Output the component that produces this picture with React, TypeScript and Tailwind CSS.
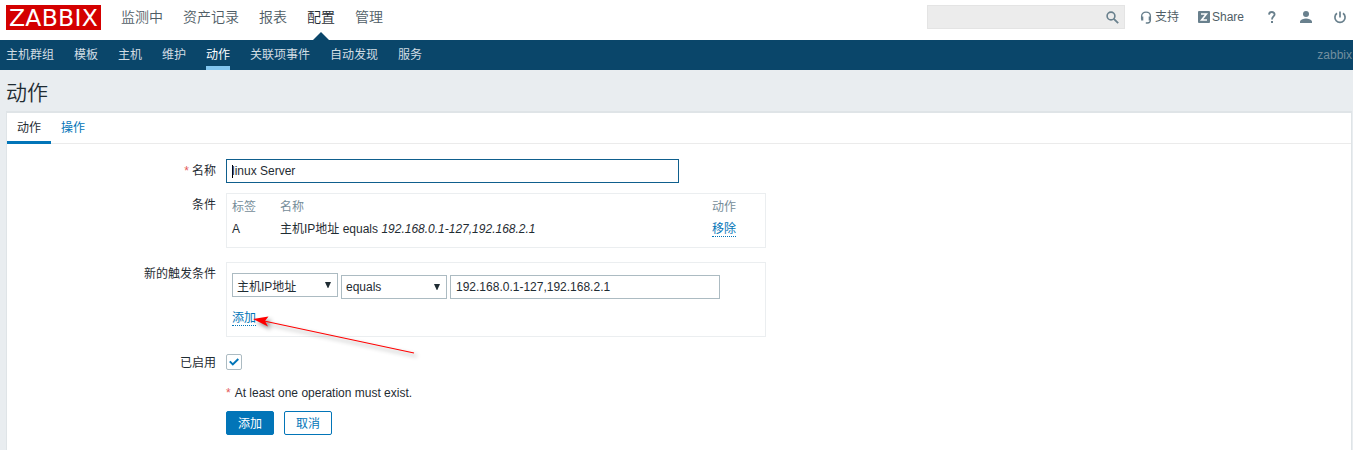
import React from "react";

const topMenu = ["监测中", "资产记录", "报表", "配置", "管理"];
const subMenu = ["主机群组", "模板", "主机", "维护", "动作", "关联项事件", "自动发现", "服务"];

function Header() {
  return (
    <header className="flex h-10 items-start bg-white pl-1.5 pr-1.5 text-[#4f5d66]">
      <div className="mt-[5px] flex h-[25px] w-[95px] shrink-0 items-center justify-center bg-[#d40000] pt-px font-['DejaVu_Sans',sans-serif] text-[23.5px] leading-[24px] tracking-[0.3px] text-white">
        ZABBIX
      </div>
      <nav className="ml-5 flex gap-5 text-sm leading-[34px] font-[350]">
        {topMenu.map((item) => (
          <a key={item} className={item === "配置" ? "relative h-10 text-[#1f2c33]" : "h-10"}>
            {item}
            {item === "配置" && (
              <svg className="absolute bottom-0 left-[6px]" width="16" height="8" viewBox="0 0 16 8">
                <path d="M0 8 8 0l8 8z" fill="#0a466a" />
              </svg>
            )}
          </a>
        ))}
      </nav>
      <div className="ml-auto mt-[5px] flex h-6 items-center">
        <div className="flex h-6 w-[198px] items-center justify-end border border-[#e4e4e4] bg-[#ececec] pr-[5px]">
          <svg width="13" height="13" viewBox="0 0 13 13" fill="none" stroke="#69808d">
            <circle cx="5" cy="5" r="3.9" strokeWidth="1.6" />
            <path d="m7.8 7.8 4.4 4.4" strokeWidth="1.8" />
          </svg>
        </div>
        <a className="ml-[15px] flex items-center gap-[3px]">
          <svg width="12" height="13" viewBox="0 0 12 13" fill="none" stroke="#69808d">
            <path d="M1.6 8V5.2C1.6 2.8 3.4 1.2 6 1.2s4.4 1.6 4.4 4V9c0 1.8-1.2 3-2.9 3H5.8" strokeWidth="1.3" />
            <path d="M2.2 5.5v4M9.8 5.5v4" strokeWidth="2.2" />
          </svg>
          支持
        </a>
        <a className="ml-[19px] flex items-center gap-[2px]">
          <svg width="12" height="12" viewBox="0 0 12 12">
            <rect width="12" height="12" rx="1" fill="#69808d" />
            <path d="M3 3h5.4L3.6 9H9" fill="none" stroke="#fff" strokeWidth="1.6" />
          </svg>
          Share
        </a>
        <svg className="ml-[24px]" width="8" height="13" viewBox="0 0 8 13">
          <path d="M1 3.6C1.1 1.8 2.2 1 3.8 1 5.5 1 6.6 2 6.6 3.4 6.6 5.4 4 5.6 4 8.4" fill="none" stroke="#69808d" strokeWidth="1.8" />
          <rect x="3" y="10" width="2" height="2" fill="#69808d" />
        </svg>
        <svg className="ml-[24px]" width="12" height="12" viewBox="0 0 12 12" fill="#69808d">
          <circle cx="6" cy="3" r="3" />
          <path d="M0 12v-1.8C1 8.6 3.5 7.5 6 7.5s5 1.1 6 2.7V12z" />
        </svg>
        <svg className="ml-[21px]" width="14" height="13" viewBox="0 0 14 13" fill="none" stroke="#69808d" strokeWidth="1.7">
          <path d="M4 2.2A5.1 5.1 0 1 0 10 2.2M7 .5v6" />
        </svg>
      </div>
    </header>
  );
}

function SubNav() {
  return (
    <nav className="flex h-[30px] gap-5 bg-[#0a466a] pl-1.5 pr-px leading-[30px] text-[#d2dde4]">
      {subMenu.map((item) => (
        <a key={item} className={item === "动作" ? "h-[30px] border-b-4 border-[#82c6ef] text-white" : "h-[30px]"}>
          {item}
        </a>
      ))}
      <span className="ml-auto text-[#738f9f]">zabbix</span>
    </nav>
  );
}

function Row({ label, required, className }: { label: string; required?: boolean; className?: string }) {
  return (
    <div className={"w-[209px] shrink-0 text-right " + (className ?? "")}>
      {required && <span className="mr-[3px] text-[#e45959]">*</span>}
      {label}
    </div>
  );
}

function Select({ value, className, labelClass }: { value: string; className?: string; labelClass?: string }) {
  return (
    <div className={"flex h-6 w-[106px] items-center justify-between border border-[#acbbc2] pl-1 pr-1.5 " + (className ?? "")}>
      <span className={labelClass}>{value}</span>
      <svg width="6" height="6" viewBox="0 0 6 6" className="-mt-px">
        <path d="M0 0h6L3.3 6h-.6z" fill="#1f2c33" />
      </svg>
    </div>
  );
}

const link = "border-b border-dotted border-[#0275b8] text-[#0275b8]";

export default function App() {
  return (
    <div className="h-[450px] w-[1353px] overflow-hidden bg-[#e9edf0] font-['Liberation_Sans','Noto_Sans_CJK_SC',sans-serif] text-xs text-[#1f2c33]">
      <Header />
      <SubNav />
      <h1 className="h-[41px] pl-1.5 text-[21px] leading-[45px] font-[350]">动作</h1>
      <main className="mr-px ml-1.5 h-[339px] border-x border-t-2 border-[#dfe4e7] bg-white">
        <div className="flex h-[31px] border-b border-[#ebebeb] leading-[31px]">
          <div className="h-[31px] w-11 border-b-3 border-[#0275b8] text-center">动作</div>
          <div className="ml-2.5 text-[#0275b8]">操作</div>
        </div>

        <div className="mt-[15px] flex">
          <Row label="名称" required className="leading-6" />
          <div className="ml-2.5 flex h-6 w-[453px] items-center border border-[#0f5f8d] pl-[5px]">
            <span className="h-[13px] w-px bg-black" />
            <span className="-ml-px">linux Server</span>
          </div>
        </div>

        <div className="mt-2.5 flex">
          <Row label="条件" className="leading-[25px]" />
          <div className="ml-2.5 h-[55px] w-[540px] border border-[#ebeef0] pt-[3px] pl-[5px]">
            <div className="grid h-[21px] grid-cols-[48px_432px_1fr] leading-5 text-[#768d99]">
              <span>标签</span>
              <span>名称</span>
              <span>动作</span>
            </div>
            <div className="grid grid-cols-[48px_432px_1fr] items-start leading-[22px]">
              <span>A</span>
              <span>
                主机IP地址 equals <em>192.168.0.1-127,192.168.2.1</em>
              </span>
              <span className="mt-[3px] flex">
                <a className={link + " h-4 leading-[17px]"}>移除</a>
              </span>
            </div>
          </div>
        </div>

        <div className="mt-3.5 flex">
          <Row label="新的触发条件" className="leading-[25px]" />
          <div className="ml-2.5 h-[75px] w-[540px] border border-[#ebeef0] pt-2.5 pl-[5px]">
            <div className="flex items-start gap-[3px]">
              <Select value="主机IP地址" labelClass="pt-1" />
              <Select value="equals" className="mt-0.5" />
              <div className="mt-0.5 flex h-6 w-[270px] items-center border border-[#acbbc2] pl-[5px]">192.168.0.1-127,192.168.2.1</div>
            </div>
            <div className="relative mt-2.5 flex">
              <a className={link + " h-[17px] leading-[18px]"}>添加</a>
              <svg className="absolute top-[1px] left-[14px] drop-shadow-[3px_3px_2px_rgba(0,0,0,0.45)]" width="176" height="48" viewBox="0 0 176 48">
                <path d="M18 11 168 43" stroke="#f00" strokeWidth="1.1" />
                <path d="M7 9 22.5 6.5 19 11l3 5.5z" fill="#f00" />
              </svg>
            </div>
          </div>
        </div>

        <div className="mt-[17px] flex h-4 items-center">
          <Row label="已启用" className="pt-0.5 leading-4" />
          <div className="ml-2.5 flex size-4 items-center justify-center rounded-[2px] border border-[#acbbc2]">
            <svg width="10" height="8" viewBox="0 0 10 8">
              <path d="m.8 3.4 3 3L9.3 1" fill="none" stroke="#0275b8" strokeWidth="2" />
            </svg>
          </div>
        </div>

        <div className="mt-4 ml-[219px] leading-[15px]">
          <span className="mr-1 text-[#e45959]">*</span>At least one operation must exist.
        </div>
        <div className="mt-2.5 ml-[219px] flex gap-2.5 text-center">
          <button className="h-6 w-12 rounded-[2px] border border-[#0275b8] bg-[#0275b8] pt-px leading-[22px] text-white">添加</button>
          <button className="h-6 w-12 rounded-[2px] border border-[#0275b8] bg-white pt-px leading-[22px] text-[#0275b8]">取消</button>
        </div>
      </main>
    </div>
  );
}
